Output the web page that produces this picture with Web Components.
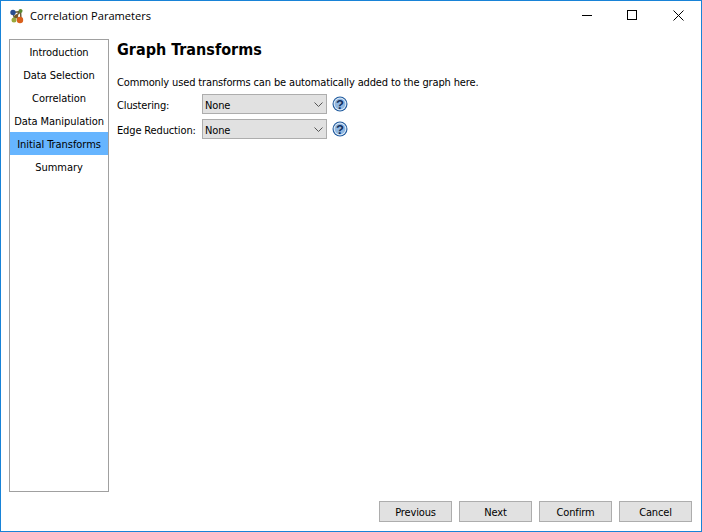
<!DOCTYPE html>
<html>
<head>
<meta charset="utf-8">
<title>Correlation Parameters</title>
<style>
html,body{margin:0;padding:0;background:#fff;}
body{font:11px "DejaVu Sans Condensed","Liberation Sans",sans-serif;letter-spacing:-.14px;color:#000;}
</style>
</head>
<body>
<wizard-window>
  <title-bar slot="title">Correlation Parameters</title-bar>
  <step-list slot="nav">
    <step-item>Introduction</step-item>
    <step-item>Data Selection</step-item>
    <step-item>Correlation</step-item>
    <step-item>Data Manipulation</step-item>
    <step-item active>Initial Transforms</step-item>
    <step-item>Summary</step-item>
  </step-list>
  <transforms-page slot="page">
    <form-row label="Clustering:"></form-row>
    <form-row label="Edge Reduction:"></form-row>
  </transforms-page>
  <flat-button slot="buttons">Previous</flat-button>
  <flat-button slot="buttons">Next</flat-button>
  <flat-button slot="buttons">Confirm</flat-button>
  <flat-button slot="buttons">Cancel</flat-button>
</wizard-window>

<script>
function define(name, html) {
  customElements.define(name, class extends HTMLElement {
    connectedCallback() {
      if (this.shadowRoot) return;
      var root = this.attachShadow({ mode: "open" });
      root.innerHTML = typeof html === "function" ? html(this) : html;
    }
  });
}

define("wizard-window", `
  <style>
    :host{display:flex;flex-direction:column;box-sizing:border-box;width:702px;height:532px;
      border:1px solid #1883d7;background:#fff;overflow:hidden;}
    .main{flex:1;display:flex;min-height:0;padding:8px 9px 0 8px;}
    .page{flex:1;min-width:0;padding-left:8px;}
    .buttons{display:flex;justify-content:flex-end;gap:7px;padding:9px 9px 9px 0;}
  </style>
  <slot name="title"></slot>
  <div class="main">
    <slot name="nav"></slot>
    <div class="page"><slot name="page"></slot></div>
  </div>
  <div class="buttons"><slot name="buttons"></slot></div>
`);

define("title-bar", `
  <style>
    :host{display:flex;align-items:center;height:30px;flex:none;}
    .logo{width:16px;height:16px;margin:0 5px 0 8px;flex:none;}
    .text{flex:1;font:11.1px "Open Sans","Noto Sans",sans-serif;letter-spacing:0;color:#000;padding-bottom:1px;}
    .ctl{box-sizing:border-box;width:45px;height:28px;display:flex;align-items:center;justify-content:center;}
    .ctl:last-child{width:46px;padding-left:1px;}
    .ctl svg{display:block;}
    .ctls{display:flex;align-self:flex-start;}
  </style>
  <svg class="logo" viewBox="0 0 16 16">
    <path d="M4 4.500L11.500 3.500L6 9L12 11.500M4 4.500L6 12.500M11.500 3.500L12 11.500" stroke="#6b5a35" stroke-width="1.500" fill="none"/>
    <circle cx="4" cy="4.500" r="2.700" fill="#2a4d8f"/>
    <circle cx="11.500" cy="3" r="2" fill="#5a8a30"/>
    <circle cx="5" cy="12" r="2.500" fill="#9aa83a"/>
    <circle cx="11" cy="12" r="3.200" fill="#d9601c"/>
    <circle cx="7.500" cy="8" r="1.800" fill="#7a5a25"/>
  </svg>
  <span class="text"><slot></slot></span>
  <div class="ctls">
    <div class="ctl"><svg width="11" height="11" viewBox="0 0 11 11"><path d="M0 5.500H10" stroke="#000" fill="none"/></svg></div>
    <div class="ctl"><svg width="11" height="11" viewBox="0 0 11 11"><rect x=".5" y=".5" width="9" height="9" stroke="#000" fill="none"/></svg></div>
    <div class="ctl"><svg width="11" height="11" viewBox="0 0 11 11"><path d="M.5 .5L10.500 10.500M10.500 .5L.5 10.500" stroke="#000" fill="none"/></svg></div>
  </div>
`);

define("step-list", `
  <style>
    :host{display:flex;flex-direction:column;box-sizing:border-box;width:100px;flex:none;
      border:1px solid #a0a0a0;background:#fff;letter-spacing:-.06px;}
  </style>
  <slot></slot>
`);

define("step-item", function (el) {
  return `
  <style>
    :host{display:block;box-sizing:border-box;height:23px;padding-top:1px;line-height:23px;text-align:center;white-space:nowrap;
      background:${el.hasAttribute("active") ? "#66b5ff" : "transparent"};}
  </style>
  <slot></slot>`;
});

define("transforms-page", `
  <style>
    :host{display:block;}
    h1{margin:0;padding-top:1px;font:bold 16px/20px "DejaVu Sans Condensed",sans-serif;letter-spacing:0;}
    p{margin:14px 0 0;height:18px;line-height:18px;}
    .rows{display:flex;flex-direction:column;gap:5px;margin-top:2px;}
  </style>
  <h1>Graph Transforms</h1>
  <p>Commonly used transforms can be automatically added to the graph here.</p>
  <div class="rows"><slot></slot></div>
`);

define("form-row", function (el) {
  return `
  <style>
    :host{display:flex;align-items:center;height:20px;}
    label{width:85px;flex:none;white-space:nowrap;padding-top:2px;}
    help-icon{margin-left:5px;}
  </style>
  <label>${el.getAttribute("label")}</label>
  <combo-box>None</combo-box>
  <help-icon></help-icon>`;
});

define("combo-box", `
  <style>
    :host{display:flex;align-items:center;box-sizing:border-box;width:125px;height:20px;
      border:1px solid #adadad;background:#e1e1e1;padding:0 0 0 2px;}
    span{flex:1;padding-top:2px;}
    svg{margin:1px 3px 0 0;display:block;}
  </style>
  <span><slot></slot></span>
  <svg width="9" height="5" viewBox="0 0 9 5"><path d="M.5 .5L4.500 4.500L8.500 .5" stroke="#555" fill="none"/></svg>
`);

define("help-icon", `
  <style>
    :host{display:block;width:16px;height:16px;flex:none;}
    svg{display:block;}
    text{font:bold 13px "Liberation Sans",sans-serif;letter-spacing:0;}
  </style>
  <svg width="16" height="16" viewBox="0 0 16 16">
    <circle cx="8" cy="8" r="7.500" fill="#1f5a9e"/>
    <circle cx="8" cy="8" r="6.400" fill="#e4eef8"/>
    <circle cx="8" cy="8" r="5.400" fill="#8fb6e0"/>
    <text x="8" y="12.700" text-anchor="middle" fill="#12305f">?</text>
  </svg>
`);

define("flat-button", `
  <style>
    :host{display:flex;align-items:center;justify-content:center;box-sizing:border-box;width:73px;height:21px;padding-top:1px;
      border:1px solid #adadad;background:#e1e1e1;}
  </style>
  <slot></slot>
`);
</script>
</body>
</html>
